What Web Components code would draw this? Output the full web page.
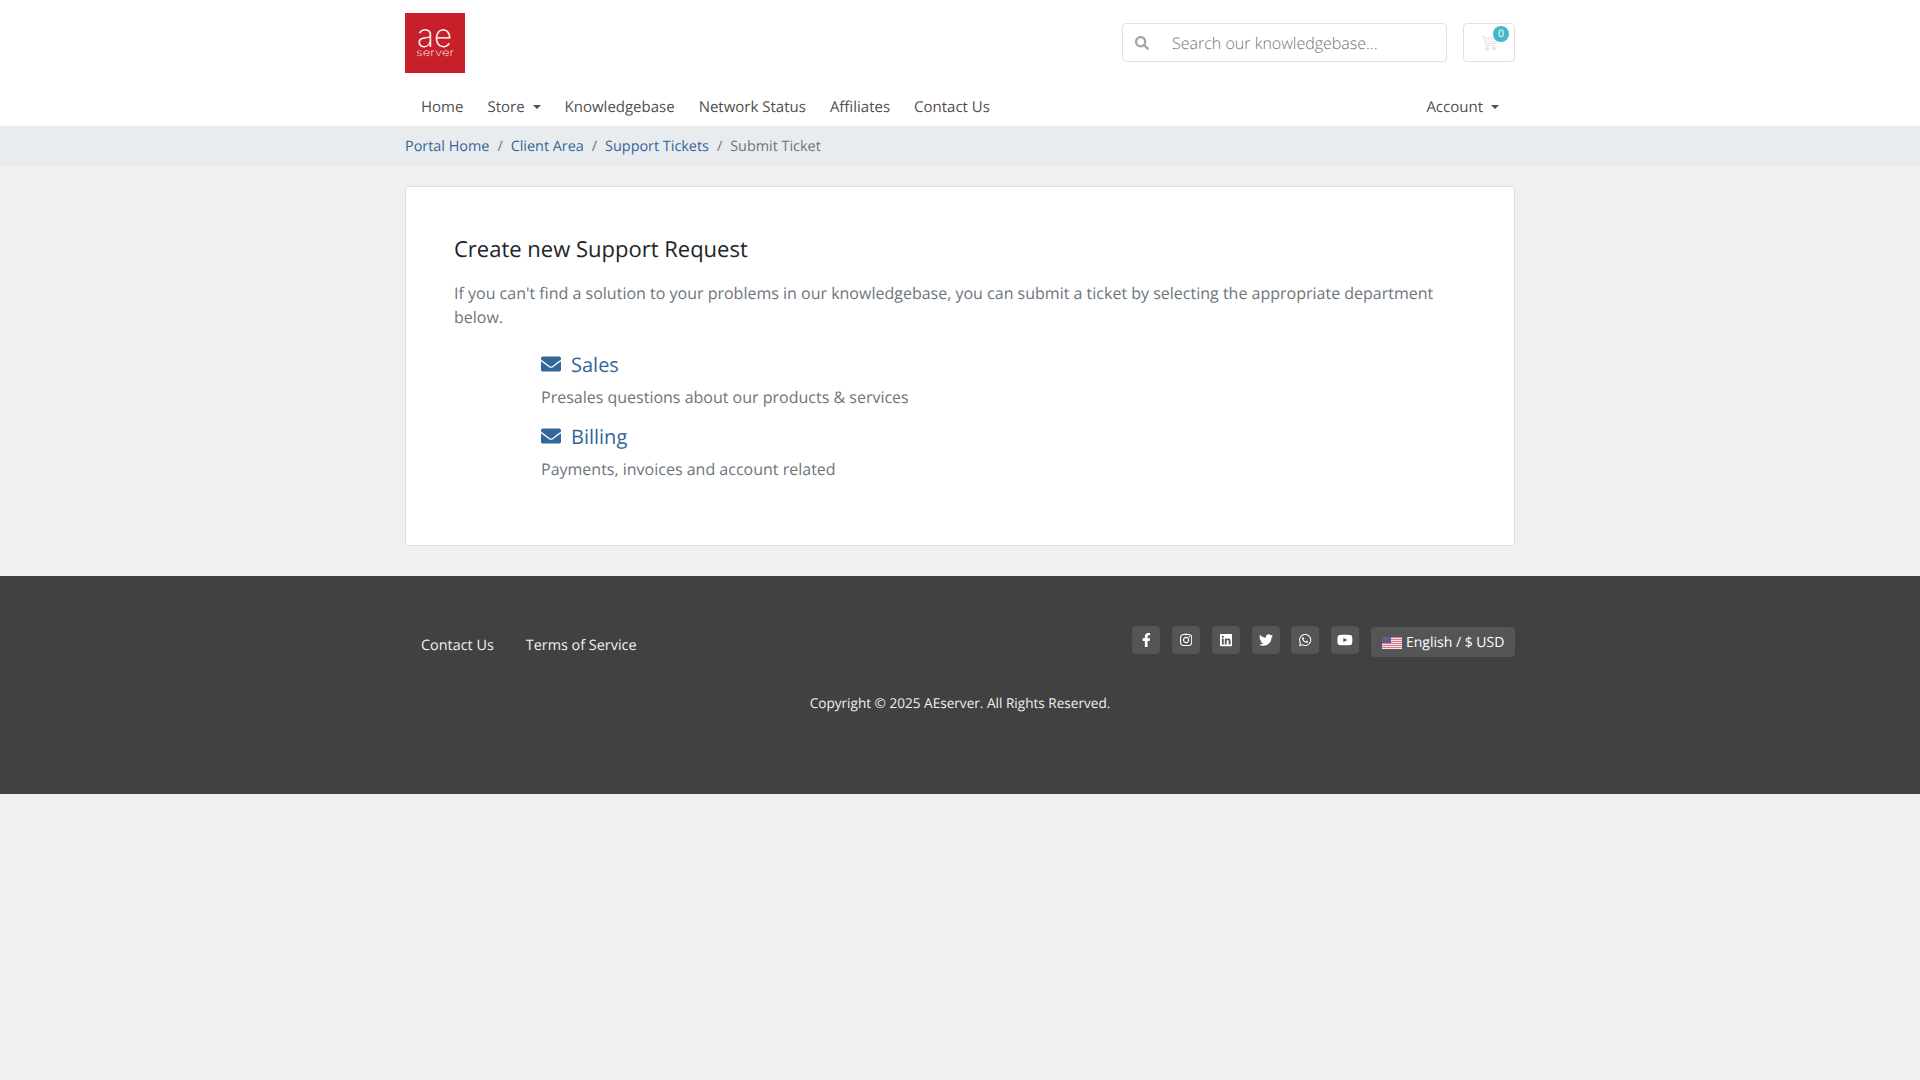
<!DOCTYPE html>
<html lang="en"><head><meta charset="utf-8"><title>Submit Ticket</title>
<style>
html,body{margin:0;padding:0}
body{background:#f0f0f0;font-family:"Open Sans","Liberation Sans",sans-serif;font-size:16px;color:#6c757d;text-rendering:geometricPrecision}
</style></head><body>
<ae-header></ae-header>
<ae-breadcrumb>
  <a href="#">Portal Home</a><a href="#">Client Area</a><a href="#">Support Tickets</a><span>Submit Ticket</span>
</ae-breadcrumb>
<ae-card title="Create new Support Request">
  <p>If you can't find a solution to your problems in our knowledgebase, you can submit a ticket by selecting the appropriate department below.</p>
  <ae-dept name="Sales" desc="Presales questions about our products &amp; services"></ae-dept>
  <ae-dept name="Billing" desc="Payments, invoices and account related"></ae-dept>
</ae-card>
<ae-footer></ae-footer>
<script>
const ICONS={
search:['0 0 512 512','M505 442.7L405.3 343c-4.5-4.5-10.6-7-17-7H372c27.6-35.3 44-79.7 44-128C416 93.1 322.9 0 208 0S0 93.1 0 208s93.1 208 208 208c48.3 0 92.7-16.4 128-44v16.3c0 6.4 2.5 12.5 7 17l99.7 99.7c9.4 9.4 24.6 9.4 33.9 0l28.3-28.3c9.4-9.4 9.4-24.6.1-34zM208 336c-70.7 0-128-57.2-128-128 0-70.7 57.2-128 128-128 70.7 0 128 57.2 128 128 0 70.7-57.2 128-128 128z'],
envelope:['0 0 512 512','M502.3 190.8c3.9-3.1 9.7-.2 9.7 4.7V400c0 26.5-21.5 48-48 48H48c-26.5 0-48-21.5-48-48V195.6c0-5 5.7-7.8 9.7-4.7 22.4 17.4 52.1 39.5 154.1 113.6 21.1 15.4 56.7 47.8 92.2 47.6 35.7.3 72-32.8 92.3-47.6 102-74.1 131.6-96.3 154-113.7zM256 320c23.2.4 56.6-29.2 73.4-41.4 132.7-96.3 142.8-104.7 173.4-128.7 5.8-4.5 9.2-11.5 9.2-18.9v-19c0-26.5-21.5-48-48-48H48C21.5 64 0 85.5 0 112v19c0 7.4 3.4 14.3 9.2 18.9 30.6 23.9 40.7 32.4 173.4 128.7 16.8 12.2 50.2 41.8 73.4 41.4z'],
facebook:['0 0 320 512','M279.14 288l14.22-92.66h-88.91v-60.13c0-25.35 12.42-50.06 52.24-50.06h40.42V6.26S260.43 0 225.36 0c-73.22 0-121.08 44.38-121.08 124.72v70.62H22.89V288h81.39v224h100.17V288z'],
instagram:['0 0 448 512','M224.1 141c-63.6 0-114.9 51.3-114.9 114.9s51.3 114.9 114.9 114.9S339 319.5 339 255.9 287.7 141 224.1 141zm0 189.6c-41.1 0-74.7-33.5-74.7-74.7s33.5-74.7 74.7-74.7 74.7 33.5 74.7 74.7-33.6 74.7-74.7 74.7zm146.4-194.3c0 14.9-12 26.8-26.8 26.8-14.9 0-26.8-12-26.8-26.8s12-26.8 26.8-26.8 26.8 12 26.8 26.8zm76.1 27.2c-1.7-35.9-9.9-67.7-36.2-93.9-26.2-26.2-58-34.4-93.9-36.2-37-2.1-147.9-2.1-184.9 0-35.8 1.7-67.6 9.9-93.9 36.1s-34.4 58-36.2 93.9c-2.1 37-2.1 147.9 0 184.9 1.7 35.9 9.9 67.7 36.2 93.9s58 34.4 93.9 36.2c37 2.1 147.9 2.1 184.9 0 35.9-1.7 67.7-9.9 93.9-36.2 26.2-26.2 34.4-58 36.2-93.9 2.1-37 2.1-147.8 0-184.8zM398.8 388c-7.8 19.6-22.9 34.7-42.6 42.6-29.5 11.7-99.5 9-132.1 9s-102.7 2.6-132.1-9c-19.6-7.8-34.7-22.9-42.6-42.6-11.7-29.5-9-99.5-9-132.1s-2.6-102.7 9-132.1c7.8-19.6 22.9-34.7 42.6-42.6 29.5-11.7 99.5-9 132.1-9s102.7-2.6 132.1 9c19.6 7.8 34.7 22.9 42.6 42.6 11.7 29.5 9 99.5 9 132.1s2.7 102.7-9 132.1z'],
linkedin:['0 0 448 512','M416 32H31.9C14.3 32 0 46.5 0 64.3v383.4C0 465.5 14.3 480 31.9 480H416c17.6 0 32-14.5 32-32.3V64.3c0-17.8-14.4-32.3-32-32.3zM135.4 416H69V202.2h66.5V416zm-33.2-243c-21.3 0-38.5-17.3-38.5-38.5S80.9 96 102.2 96c21.2 0 38.5 17.3 38.5 38.5 0 21.3-17.2 38.5-38.5 38.5zm282.1 243h-66.4V312c0-24.8-.5-56.7-34.5-56.7-34.6 0-39.9 27-39.9 54.9V416h-66.4V202.2h63.7v29.2h.9c8.9-16.8 30.6-34.5 62.9-34.5 67.2 0 79.7 44.3 79.7 101.9V416z'],
twitter:['0 0 512 512','M459.37 151.716c.325 4.548.325 9.097.325 13.645 0 138.72-105.583 298.558-298.558 298.558-59.452 0-114.68-17.219-161.137-47.106 8.447.974 16.568 1.299 25.34 1.299 49.055 0 94.213-16.568 130.274-44.832-46.132-.975-84.792-31.188-98.112-72.772 6.498.974 12.995 1.624 19.818 1.624 9.421 0 18.843-1.3 27.614-3.573-48.081-9.747-84.143-51.98-84.143-102.985v-1.299c13.969 7.797 30.214 12.67 47.431 13.319-28.264-18.843-46.781-51.005-46.781-87.391 0-19.492 5.197-37.36 14.294-52.954 51.655 63.675 129.3 105.258 216.365 109.807-1.624-7.797-2.599-15.918-2.599-24.04 0-57.828 46.782-104.934 104.934-104.934 30.213 0 57.502 12.67 76.67 33.137 23.715-4.548 46.456-13.32 66.599-25.34-7.798 24.366-24.366 44.833-46.132 57.827 21.117-2.273 41.584-8.122 60.426-16.243-14.292 20.791-32.161 39.308-52.628 54.253z'],
whatsapp:['0 0 448 512','M380.9 97.1C339 55.1 283.2 32 223.9 32c-122.4 0-222 99.6-222 222 0 39.1 10.2 77.3 29.6 111L0 480l117.7-30.9c32.4 17.7 68.9 27 106.1 27h.1c122.3 0 224.1-99.6 224.1-222 0-59.3-25.2-115-67.1-157zm-157 341.6c-33.2 0-65.7-8.9-94-25.7l-6.7-4-69.8 18.3L72 359.2l-4.4-7c-18.5-29.4-28.2-63.3-28.2-98.2 0-101.7 82.8-184.5 184.6-184.5 49.3 0 95.6 19.2 130.4 54.1 34.8 34.9 56.2 81.2 56.1 130.5 0 101.8-84.9 184.6-186.6 184.6zm101.2-138.2c-5.5-2.8-32.8-16.2-37.9-18-5.1-1.9-8.8-2.8-12.5 2.8-3.7 5.6-14.3 18-17.6 21.8-3.2 3.7-6.5 4.2-12 1.4-32.6-16.3-54-29.1-75.5-66-5.7-9.8 5.7-9.1 16.3-30.3 1.8-3.7.9-6.9-.5-9.7-1.4-2.8-12.5-30.1-17.1-41.2-4.5-10.8-9.1-9.3-12.5-9.5-3.2-.2-6.9-.2-10.6-.2-3.7 0-9.7 1.4-14.8 6.9-5.1 5.6-19.4 19-19.4 46.3 0 27.3 19.9 53.7 22.6 57.4 2.8 3.7 39.1 59.7 94.8 83.8 35.2 15.2 49 16.5 66.6 13.9 10.7-1.6 32.8-13.4 37.4-26.4 4.6-13 4.6-24.1 3.2-26.4-1.3-2.5-5-3.9-10.5-6.6z'],
youtube:['0 0 576 512','M549.655 124.083c-6.281-23.65-24.787-42.276-48.284-48.597C458.781 64 288 64 288 64S117.22 64 74.629 75.486c-23.497 6.322-42.003 24.947-48.284 48.597-11.412 42.867-11.412 132.305-11.412 132.305s0 89.438 11.412 132.305c6.281 23.65 24.787 41.5 48.284 47.821C117.22 448 288 448 288 448s170.78 0 213.371-11.486c23.497-6.321 42.003-24.171 48.284-47.821 11.412-42.867 11.412-132.305 11.412-132.305s0-89.438-11.412-132.305zm-317.51 213.508V175.185l142.739 81.205-142.739 81.201z']
};
const icon=(n,h)=>{const[v,d]=ICONS[n];const p=v.split(' ');return `<svg width="${h*p[2]/512}" height="${h}" viewBox="${v}" fill="currentColor" aria-hidden="true"><path d="${d}"/></svg>`};
const define=(tag,render)=>customElements.define(tag,class extends HTMLElement{
  constructor(){super();this.attachShadow({mode:'open'})}
  connectedCallback(){this.shadowRoot.innerHTML=render(this)}
});
define('ae-logo',()=>`<style>:host{display:block;width:60px;height:60px}svg{display:block}</style>
<svg width="60" height="60" viewBox="0 0 60 60"><rect width="60" height="60" fill="#c7202a"/>
<text x="12" y="34" fill="#fff" font-family="Inter,'Open Sans',sans-serif" font-weight="200" font-size="32" textLength="35" lengthAdjust="spacingAndGlyphs">ae</text>
<text x="11" y="43" fill="#fff" font-family="Inter,'Open Sans',sans-serif" font-weight="200" font-size="10" textLength="38" lengthAdjust="spacingAndGlyphs">server</text></svg>`);
define('ae-navlink',el=>`<style>:host{display:block}
a{display:flex;align-items:center;height:39px;padding:0 12px;color:#4f4f4f;font-size:15px;text-decoration:none;white-space:nowrap}
.c{width:0;height:0;margin-left:8px;border-top:4.5px solid #4f4f4f;border-left:4.5px solid transparent;border-right:4.5px solid transparent}</style>
<a href="#"><slot></slot>${el.hasAttribute('caret')?'<span class="c"></span>':''}</a>`);
define('ae-header',()=>`<style>
:host{display:block;background:#fff;height:126px}
.w{width:1110px;margin:0 auto}
.top{display:flex;align-items:flex-start;height:87px;padding-top:13px;box-sizing:border-box}
.search{margin:10px 0 0 auto;width:325px;height:39px;box-sizing:border-box;border:1px solid #dee2e6;border-radius:4px;display:flex;align-items:center;color:#a3a3a3}
.ic{width:49px;padding-left:12px;box-sizing:border-box;display:flex;align-items:center}
.ph{font-size:16px;font-weight:300;color:#6c757d;white-space:nowrap}
.cart{position:relative;margin:10px 0 0 16px;width:52px;height:39px;box-sizing:border-box;border:1px solid #dee2e6;border-radius:4px;display:flex;align-items:center;justify-content:center}
.badge{position:absolute;left:29px;top:2px;width:16px;height:16px;border-radius:50%;background:#45b5c9;color:#fff;font-size:10.5px;line-height:16px;text-align:center}
nav{display:flex;height:39px;padding:0 4px}
.sp{flex:1}
</style>
<div class="w"><div class="top"><ae-logo></ae-logo>
<div class="search"><span class="ic">${icon('search',14)}</span><span class="ph">Search our knowledgebase...</span></div>
<div class="cart"><svg width="17" height="16" viewBox="0 0 17 16" fill="none" stroke="#e6e6e6" stroke-width="1.2"><path d="M.5 1h2.4l2 9.5h9"/><path d="M3.3 3h12.7l-1.4 5.5H4.4z"/><path d="M7 3.5v5M10 3.5v5M13 3.5v5"/><circle cx="6" cy="13.6" r="1.5" fill="#e6e6e6"/><circle cx="13" cy="13.6" r="1.5" fill="#e6e6e6"/></svg><span class="badge">0</span></div></div>
<nav><ae-navlink>Home</ae-navlink><ae-navlink caret>Store</ae-navlink><ae-navlink>Knowledgebase</ae-navlink><ae-navlink>Network Status</ae-navlink><ae-navlink>Affiliates</ae-navlink><ae-navlink>Contact Us</ae-navlink><span class="sp"></span><ae-navlink caret>Account</ae-navlink></nav></div>`);
define('ae-breadcrumb',()=>`<style>
:host{display:block;background:#e9ecef;height:40px}
.w{width:1110px;margin:0 auto;height:40px;display:flex;align-items:center;font-size:14.4px;color:#6c757d}
::slotted(a){color:#336699;text-decoration:none}
::slotted(*:not(:last-child))::after{content:"/";color:#6c757d;padding:0 8px}
</style><div class="w"><slot></slot></div>`);
define('ae-card',el=>`<style>
:host{display:block;box-sizing:border-box;width:1110px;height:360px;margin:20px auto 30px;background:#fff;border:1px solid #ddd;border-radius:4px;padding:48px}
h1{margin:0 0 18.4px;font-size:22px;line-height:28px;font-weight:400;color:#212529}
::slotted(p){margin:0 0 20px;font-size:16px;line-height:24px;color:#6c757d}
</style><h1>${el.getAttribute('title')}</h1><slot></slot>`);
define('ae-dept',el=>`<style>
:host{display:block;margin-left:87px;height:72px}
a{display:flex;align-items:center;height:30px;color:#336699;font-size:20px;text-decoration:none}
svg{margin-right:10px}
p{margin:6px 0 0;font-size:16px;line-height:24px;color:#6c757d}
</style><a href="#">${icon('envelope',20)}${el.getAttribute('name')}</a><p>${el.getAttribute('desc')}</p>`);
define('ae-social',el=>`<style>:host{display:flex;width:28px;height:28px;border-radius:4px;background:#555;color:#fff;align-items:center;justify-content:center;margin-right:11.8px}</style>${icon(el.getAttribute('icon'),+el.getAttribute('size')||14)}`);
define('ae-footer',()=>`<style>
:host{display:block;background:#414141;height:218px;color:#f0f0f0}
.w{width:1110px;margin:0 auto;padding-top:50px}
.r{display:flex;align-items:flex-start}
.links{display:flex;height:38px;align-items:center;font-size:14.4px;padding:0 16px;gap:32px}
.links a{color:#f0f0f0;text-decoration:none}
.soc{margin-left:auto;display:flex}
.lang{display:flex;align-items:center;width:144px;height:30px;margin-top:1px;box-sizing:border-box;padding-left:11px;background:#555;border-radius:4px;font-size:14px;color:#fff;white-space:nowrap}
.lang svg{margin-right:4px;margin-top:2px}
.c{text-align:center;font-size:13.6px;line-height:20px;margin-top:29px}
</style><div class="w"><div class="r"><div class="links"><a href="#">Contact Us</a><a href="#">Terms of Service</a></div>
<div class="soc"><ae-social icon="facebook"></ae-social><ae-social icon="instagram"></ae-social><ae-social icon="linkedin"></ae-social><ae-social icon="twitter"></ae-social><ae-social icon="whatsapp"></ae-social><ae-social icon="youtube"></ae-social>
<div class="lang"><svg width="20" height="12" viewBox="0 0 20 12"><rect width="20" height="12" fill="#f3e4e6"/><g fill="#dc7b88"><rect width="20" height="1"/><rect y="2" width="20" height="1"/><rect y="4" width="20" height="1"/><rect y="6" width="20" height="1"/><rect y="8" width="20" height="1"/><rect y="10" width="20" height="1"/></g><rect width="9" height="6" fill="#5b5f94"/></svg>English / $ USD</div></div></div>
<div class="c">Copyright © 2025 AEserver. All Rights Reserved.</div></div>`);
</script></body></html>
